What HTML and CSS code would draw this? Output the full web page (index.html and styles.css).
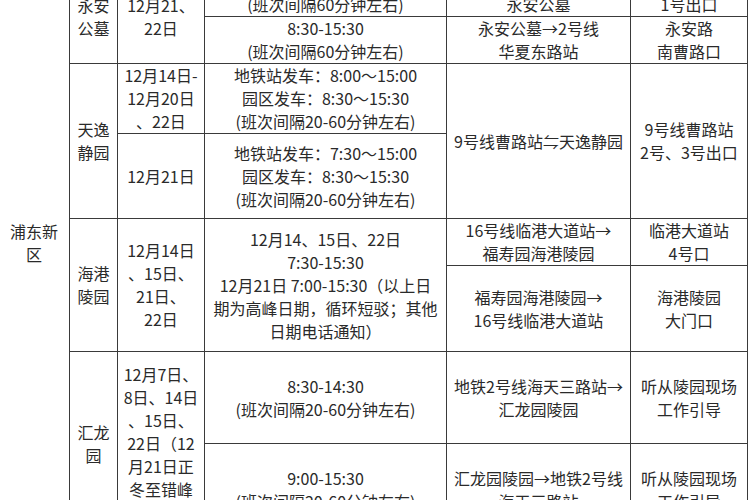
FILE: index.html
```html
<!DOCTYPE html>
<html lang="zh-CN">
<head>
<meta charset="utf-8">
<title>扫墓班车安排</title>
<link rel="stylesheet" href="styles.css">
</head>
<body>
<div class="viewport">
<table class="schedule">
  <colgroup>
    <col class="c1"><col class="c2"><col class="c3"><col class="c4"><col class="c5"><col class="c6">
  </colgroup>
  <tbody>
    <tr class="r0">
      <td rowspan="8" class="district">浦东新<br>区</td>
      <td rowspan="2">永安<br>公墓</td>
      <td rowspan="2">12月21、<br>22日</td>
      <td>8:30-15:30<br>(班次间隔60分钟左右)</td>
      <td>2号线华夏东路站→<br>永安公墓</td>
      <td>华夏东路站<br>1号出口</td>
    </tr>
    <tr class="r1">
      <td>8:30-15:30<br>(班次间隔60分钟左右)</td>
      <td>永安公墓→2号线<br>华夏东路站</td>
      <td>永安路<br>南曹路口</td>
    </tr>
    <tr class="r2">
      <td rowspan="2">天逸<br>静园</td>
      <td>12月14日-<br>12月20日<br>、22日</td>
      <td>地铁站发车：8:00～15:00<br>园区发车：8:30～15:30<br>(班次间隔20-60分钟左右)</td>
      <td rowspan="2">9号线曹路站⇋天逸静园</td>
      <td rowspan="2">9号线曹路站<br>2号、3号出口</td>
    </tr>
    <tr class="r3">
      <td>12月21日</td>
      <td>地铁站发车：7:30～15:00<br>园区发车：8:30～15:30<br>(班次间隔20-60分钟左右)</td>
    </tr>
    <tr class="r4">
      <td rowspan="2">海港<br>陵园</td>
      <td rowspan="2">12月14日<br>、15日、<br>21日、<br>22日</td>
      <td rowspan="2">12月14、15日、22日<br>7:30-15:30<br>12月21日 7:00-15:30（以上日<br>期为高峰日期，循环短驳；其他<br>日期电话通知）</td>
      <td>16号线临港大道站→<br>福寿园海港陵园</td>
      <td>临港大道站<br>4号口</td>
    </tr>
    <tr class="r5">
      <td>福寿园海港陵园→<br>16号线临港大道站</td>
      <td>海港陵园<br>大门口</td>
    </tr>
    <tr class="r6">
      <td rowspan="2">汇龙<br>园</td>
      <td rowspan="2">12月7日、<br>8日、14日<br>、15日、<br>22日（12<br>月21日正<br>冬至错峰<br>出行）</td>
      <td>8:30-14:30<br>(班次间隔20-60分钟左右)</td>
      <td>地铁2号线海天三路站→<br>汇龙园陵园</td>
      <td>听从陵园现场<br>工作引导</td>
    </tr>
    <tr class="r7">
      <td>9:00-15:30<br>(班次间隔20-60分钟左右)</td>
      <td>汇龙园陵园→地铁2号线<br>海天三路站</td>
      <td>听从陵园现场<br>工作引导</td>
    </tr>
  </tbody>
</table>
</div>
</body>
</html>
```

FILE: styles.css
```css
html, body {
  margin: 0;
  padding: 0;
  background: #ffffff;
}

.viewport {
  width: 750px;
  height: 500px;
  overflow: hidden;
}

.schedule {
  border-collapse: collapse;
  table-layout: fixed;
  width: 750px;
  margin: -31px 0 0 -2px;
  font-family: "Noto Sans CJK SC", "Noto Sans", sans-serif;
  font-size: 16px;
  line-height: 23px;
  color: #2a2a2a;
}

.c1 { width: 71px; }
.c2 { width: 48px; }
.c3 { width: 87px; }
.c4 { width: 242px; }
.c5 { width: 184px; }
.c6 { width: 117px; }

.schedule td {
  border: 1px solid #3a3a3a;
  padding: 0 2px;
  text-align: center;
  vertical-align: middle;
  white-space: nowrap;
}

.schedule .district {
  padding-bottom: 20px;
}

.r0 { height: 47px; }
.r1 { height: 47px; }
.r2 { height: 69px; }
.r3 { height: 85px; }
.r4 { height: 46px; }
.r5 { height: 86px; }
.r6 { height: 92px; }
.r7 { height: 92px; }
```
